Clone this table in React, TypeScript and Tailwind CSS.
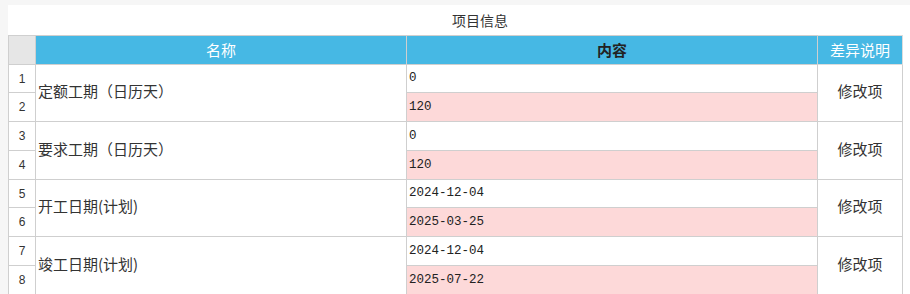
import React from "react";

const rows = [
  { name: "定额工期（日历天）", before: "0", after: "120", note: "修改项" },
  { name: "要求工期（日历天）", before: "0", after: "120", note: "修改项" },
  { name: "开工日期(计划)", before: "2024-12-04", after: "2025-03-25", note: "修改项" },
  { name: "竣工日期(计划)", before: "2024-12-04", after: "2025-07-22", note: "修改项" },
];

// row heights so the lines land where the reference has them
const heights = ["h-[28px]", "h-[29px]", "h-[29px]", "h-[29px]", "h-[28px]", "h-[29px]", "h-[29px]", "h-[29px]"];

export default function App() {
  const cjk = { fontFamily: '"Noto Sans CJK SC", "Liberation Sans", sans-serif' };
  const mono = { fontFamily: '"Liberation Mono", "Noto Sans CJK SC", monospace' };

  return (
    <div className="w-[910px] h-[294px] overflow-hidden bg-[#f6f6f6] pt-[5px] pl-[8px]" style={cjk}>
      <div className="bg-white h-[289px]">
        <div className="h-[30px] flex items-center justify-center pl-[42px] text-[14px] text-[#333]">
          项目信息
        </div>

        <table className="border-collapse table-fixed w-[894px]">
          <colgroup>
            <col className="w-[27px]" />
            <col className="w-[371px]" />
            <col className="w-[411px]" />
            <col className="w-[85px]" />
          </colgroup>
          <thead>
            <tr className="h-[29px]">
              <th className="border border-[#cfcfcf] bg-[#e6e6e6] p-0"></th>
              <th className="border border-[#cfcfcf] bg-[#46b8e4] p-0 text-[15px] font-normal text-white">名称</th>
              <th className="border border-[#cfcfcf] bg-[#46b8e4] p-0 text-[15px] font-bold text-[#222]">内容</th>
              <th className="border border-[#dcdcdc] bg-[#46b8e4] p-0 text-[15px] font-normal text-white">差异说明</th>
            </tr>
          </thead>
          <tbody>
            {rows.map((r, i) => (
              <React.Fragment key={i}>
                <tr className={heights[i * 2]}>
                  <td className="border border-[#cfcfcf] p-0 text-center text-[12px] text-[#333]" style={{ fontFamily: '"Liberation Sans", sans-serif' }}>
                    {i * 2 + 1}
                  </td>
                  <td rowSpan={2} className="border border-[#cfcfcf] pl-[2px] pb-[3px] text-[15px] text-[#333]">
                    {r.name}
                  </td>
                  <td className="border border-[#cfcfcf] pl-[2px] text-[12.5px] text-[#222] bg-white" style={mono}>
                    {r.before}
                  </td>
                  <td rowSpan={2} className="border border-[#cfcfcf] pb-[3px] text-center text-[15px] text-[#333]">
                    {r.note}
                  </td>
                </tr>
                <tr className={heights[i * 2 + 1]}>
                  <td className="border border-[#cfcfcf] p-0 text-center text-[12px] text-[#333]" style={{ fontFamily: '"Liberation Sans", sans-serif' }}>
                    {i * 2 + 2}
                  </td>
                  <td className="border border-[#cfcfcf] pl-[2px] text-[12.5px] text-[#222] bg-[#fdd9d9]" style={mono}>
                    {r.after}
                  </td>
                </tr>
              </React.Fragment>
            ))}
          </tbody>
        </table>
      </div>
    </div>
  );
}
